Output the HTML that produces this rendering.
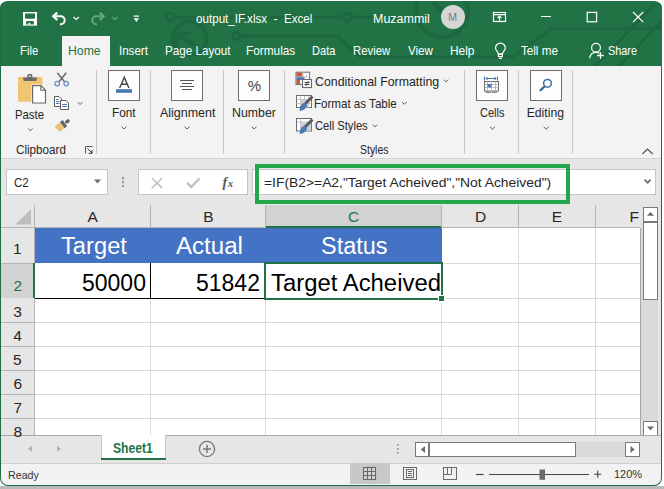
<!DOCTYPE html>
<html><head><meta charset="utf-8">
<style>
html,body{margin:0;padding:0;}
body{width:664px;height:489px;position:relative;overflow:hidden;background:#ffffff;font-family:"Liberation Sans",sans-serif;}
.a{position:absolute;box-sizing:border-box;}
.t{position:absolute;white-space:pre;line-height:1;transform-origin:0 0;font-family:"Liberation Sans",sans-serif;}
svg{position:absolute;overflow:visible;}
</style></head><body>
<!-- bottom grey strip -->
<div class="a" style="left:0;top:486px;width:664px;height:3px;background:#b9b9b9"></div>
<!-- window -->
<div class="a" style="left:0;top:1px;width:662px;height:485px;border-radius:7px 7px 8px 8px;background:#f3f3f3;overflow:hidden">
<div class="a" style="left:0;top:-1px;width:664px;height:489px">
<!-- title bar + tabs green -->
<div class="a" style="left:0;top:1px;width:662px;height:65px;border-radius:7px 7px 0 0;background:#217346;overflow:hidden">
<svg width="662" height="65" style="left:0;top:0" fill="none" stroke="#1d683e" stroke-width="3">
  <path d="M174 16 H343 M351 16 H414" />
  <circle cx="170" cy="16" r="4"/>
  <circle cx="347" cy="16" r="4"/>
  <circle cx="189.8" cy="37.4" r="17" stroke-width="4"/>
  <path d="M178.5 33.5 L199 47 M177 46 V32.4 H191" stroke-width="4"/>
  <path d="M240 35.2 H338 L360 56 H512 L552 27.5 H662" />
  <circle cx="236.2" cy="35.2" r="3.6"/>
  <circle cx="442" cy="10" r="26" stroke-width="4"/>
  <path d="M430 -2 L452 20" stroke-width="4"/>
  <path d="M594 66 L655 3 M618 66 L662 20" />
</svg>
</div>
<!-- Home tab -->
<div class="a" style="left:62px;top:36px;width:48px;height:31px;background:#f3f3f3"></div>
<!-- ribbon bottom line -->
<div class="a" style="left:1px;top:158px;width:660px;height:1px;background:#d4d4d4"></div>
<!-- formula bar area -->
<div class="a" style="left:1px;top:159px;width:660px;height:46px;background:#e6e6e6"></div>

<!-- ===== QAT icons ===== -->
<svg width="664" height="40" style="left:0;top:0" fill="none" stroke="#ffffff" stroke-width="2">
  <!-- save -->
  <rect x="23" y="12" width="14" height="13.6" fill="#fff" stroke="none"/>
  <path d="M25 13.4 H35 V18 L34.2 18.8 H25.8 L25 18 Z" fill="#217346" stroke="none"/>
  <rect x="26.2" y="21" width="7.6" height="3.4" fill="#217346" stroke="none"/>
  <rect x="28.4" y="22.8" width="1.9" height="1.8" fill="#fff" stroke="none"/>
  <!-- undo -->
  <path d="M53.5 16.3 H60.7 A4 4 0 0 1 60.7 24.3 H60" stroke-width="2"/>
  <path d="M57.2 12.6 L53.4 16.3 L57.2 20" stroke-width="2.4"/>
  <path d="M73.5 17 L76.2 19.5 L79 17" stroke-width="1.1"/>
  <!-- redo (disabled) -->
  <g stroke="#64a67e">
  <path d="M103.5 16.3 H96.3 A4 4 0 0 0 96.3 24.3 H97" stroke-width="2"/>
  <path d="M99.8 12.6 L103.6 16.3 L99.8 20" stroke-width="2.4"/>
  <path d="M112.3 17 L115 19.5 L117.7 17" stroke-width="1.1"/>
  </g>
  <!-- customize -->
  <path d="M133.7 16.2 H139" stroke-width="1.3"/>
  <path d="M133.7 18.2 H139 L136.35 21.9 Z" fill="#fff" stroke="none"/>
  <!-- ribbon display options -->
  <rect x="493.5" y="12.5" width="12" height="9" stroke-width="1.2"/>
  <path d="M493.5 14.6 H505.5" stroke-width="1.2"/>
  <path d="M499.5 16 V22 M497.5 18 L499.5 16 L501.5 18" stroke-width="1.1"/>
  <!-- minimize -->
  <path d="M541 16.5 H551" stroke-width="1.1"/>
  <!-- maximize -->
  <rect x="587.2" y="12.4" width="9.4" height="9.4" stroke-width="1.2"/>
  <!-- close -->
  <path d="M633 12 L643.2 22.2 M643.2 12 L633 22.2" stroke-width="1.2"/>
  <!-- avatar -->
  <circle cx="453" cy="17" r="12" fill="#d6d6d6" stroke="none"/>
</svg>
<!-- tell me bulb + share -->
<svg width="664" height="70" style="left:0;top:0" fill="none" stroke="#ffffff" stroke-width="1.2">
  <path d="M498.4 54.2 C498.4 51.8 495.5 50.3 495.5 48 A4.9 4.9 0 1 1 505.3 48 C505.3 50.3 502.4 51.8 502.4 54.2 Z"/>
  <rect x="498.4" y="54.2" width="4" height="2.4"/>
  <path d="M499 58.4 H501.9"/>
  <circle cx="596" cy="47.8" r="4.4"/>
  <path d="M589.5 58.3 C590.3 54.5 592.5 52.4 596 52.4 C597.5 52.4 598.5 52.7 599.5 53.2"/>
  <path d="M597.2 55.5 H603.8 M600.5 52.2 V58.8" stroke-width="1.3"/>
</svg>

<!-- ===== Ribbon icons ===== -->
<svg width="664" height="160" style="left:0;top:0">
  <!-- paste -->
  <rect x="18" y="77" width="24.4" height="24.7" rx="1.5" fill="#efc574"/>
  <path d="M23.2 77.4 H36.8 V79.5 Q36.8 81 35.3 81 H24.7 Q23.2 81 23.2 79.5 Z" fill="#6a6a6a"/>
  <rect x="27.3" y="74" width="5.1" height="4" rx="1.6" fill="#6a6a6a"/>
  <circle cx="29.85" cy="76.2" r="0.9" fill="#f3f3f3"/>
  <path d="M31.5 84.5 H41 L46.3 89.8 V103.8 H31.5 Z" fill="#f3f3f3"/>
  <path d="M32.6 85.6 H40.8 L45.5 90.3 V103 H32.6 Z" fill="#ffffff" stroke="#6a6a6a" stroke-width="1.2"/>
  <path d="M40.8 85.6 V90.3 H45.5" fill="none" stroke="#6a6a6a" stroke-width="1.1"/>
  <!-- scissors -->
  <path d="M57.3 72.8 L64.6 81.8 M66.3 72.8 L59 81.8" stroke="#6a6a6a" stroke-width="1.5"/>
  <circle cx="57.2" cy="83.6" r="2.3" fill="none" stroke="#6b8fbf" stroke-width="1.3"/>
  <circle cx="66.2" cy="83.6" r="2.3" fill="none" stroke="#6b8fbf" stroke-width="1.3"/>
  <!-- copy -->
  <path d="M54.5 96.5 H59 L61.5 99 V106.5 H54.5 Z" fill="#fff" stroke="#5a5a5a" stroke-width="1"/>
  <path d="M56 99.5 H58.5 M56 101.5 H59.5 M56 103.5 H59.5" stroke="#4a78b0" stroke-width="1"/>
  <path d="M60.5 100.5 H66 L68.5 103 V109.5 H60.5 Z" fill="#fff" stroke="#5a5a5a" stroke-width="1"/>
  <path d="M62 104.5 H67 M62 106.5 H67" stroke="#4a78b0" stroke-width="1"/>
  <path d="M78 102.3 L80.1 104.5 L82.2 102.3" fill="none" stroke="#5a5a5a" stroke-width="1"/>
  <!-- format painter -->
  <g transform="translate(62 125.3) rotate(-36)">
    <path d="M-6.8 -3.2 L-0.3 -3.8 V3.8 L-5.6 3.8 Z" fill="#ecc06c"/>
    <rect x="0.2" y="-3.8" width="3.4" height="7.6" fill="#646464"/>
    <rect x="4.4" y="-1.6" width="4.6" height="3.2" rx="1" fill="#646464"/>
  </g>
  <!-- chevrons -->
  <path d="M28.2 128.5 L30.4 130.8 L32.6 128.5" fill="none" stroke="#5a5a5a" stroke-width="1"/>
  <path d="M121.7 126.6 L124.1 129 L126.5 126.6" fill="none" stroke="#5a5a5a" stroke-width="1"/>
  <path d="M184.5 126.6 L187 129 L189.5 126.6" fill="none" stroke="#5a5a5a" stroke-width="1"/>
  <path d="M251.6 126.6 L254.1 129 L256.6 126.6" fill="none" stroke="#5a5a5a" stroke-width="1"/>
  <path d="M489.9 126.8 L492.4 129.2 L494.9 126.8" fill="none" stroke="#5a5a5a" stroke-width="1"/>
  <path d="M543.7 126.8 L546.2 129.2 L548.7 126.8" fill="none" stroke="#5a5a5a" stroke-width="1"/>
  <path d="M443.8 79.7 L446 81.9 L448.2 79.7" fill="none" stroke="#5a5a5a" stroke-width="1"/>
  <path d="M402.2 102.1 L404.4 104.3 L406.6 102.1" fill="none" stroke="#5a5a5a" stroke-width="1"/>
  <path d="M372.8 124.7 L375 126.9 L377.2 124.7" fill="none" stroke="#5a5a5a" stroke-width="1"/>
  <!-- dialog launcher -->
  <path d="M85.5 153.5 V146.5 H92.5" fill="none" stroke="#5a5a5a" stroke-width="1"/>
  <path d="M87.5 148.5 L92 153 M92 150 V153.3 H88.7" fill="none" stroke="#333" stroke-width="1"/>
  <!-- separators -->
  <path d="M96.5 70 V154 M150.5 70 V154 M223.5 70 V154 M284.5 70 V154 M464.5 70 V154 M518.5 70 V154 M572.5 70 V154" stroke="#c8c8c8" stroke-width="1"/>
  <!-- icon boxes -->
  <rect x="108.5" y="70.5" width="31" height="30" fill="#fdfdfd" stroke="#6e6e6e" stroke-width="1"/>
  <rect x="171.5" y="70.5" width="31" height="30" fill="#fdfdfd" stroke="#6e6e6e" stroke-width="1"/>
  <rect x="238.5" y="70.5" width="31" height="30" fill="#fdfdfd" stroke="#6e6e6e" stroke-width="1"/>
  <rect x="476.5" y="70.5" width="31" height="30" fill="#fdfdfd" stroke="#6e6e6e" stroke-width="1"/>
  <rect x="530.5" y="70.5" width="31" height="30" fill="#fdfdfd" stroke="#6e6e6e" stroke-width="1"/>
  <!-- font A -->
  <path d="M119.7 88 L124.3 77.2 L128.9 88 M121.3 84.3 H127.3" fill="none" stroke="#444" stroke-width="1.4"/>
  <rect x="116" y="89.2" width="16" height="3.6" fill="#4a74b4"/>
  <!-- alignment -->
  <path d="M180 80.5 H194 M182 83.5 H192 M180 86.5 H194 M182 89.5 H192" stroke="#555" stroke-width="1"/>
  <!-- percent -->
  <text x="254.5" y="91" font-family="Liberation Sans" font-size="15" fill="#444" text-anchor="middle">%</text>
  <!-- cells icon -->
  <path d="M484.5 76.5 V80.5 M497.5 76.5 V80.5" stroke="#4a78b0" stroke-width="1"/>
  <path d="M486 78.5 H496 M487.5 77 L486 78.5 L487.5 80 M494.5 77 L496 78.5 L494.5 80" fill="none" stroke="#4a78b0" stroke-width="1"/>
  <rect x="484.5" y="81.5" width="14" height="9.5" fill="#fff" stroke="#6a6a6a" stroke-width="1"/>
  <path d="M484.5 84.5 H498.5 M484.5 87.5 H498.5 M487.5 81.5 V91 M491.5 81.5 V91 M495.5 81.5 V91" stroke="#b0b0b0" stroke-width="0.8"/>
  <rect x="487.5" y="84" width="4" height="3.4" fill="#4a78b0"/>
  <path d="M485.5 92.3 H491 M492 92.3 H497" stroke="#6a6a6a" stroke-width="1"/>
  <!-- magnifier -->
  <circle cx="547.5" cy="83.3" r="3.9" fill="none" stroke="#3e6fa3" stroke-width="1.5"/>
  <path d="M544.5 86.5 L540.6 90.2" stroke="#3e6fa3" stroke-width="2.4" stroke-linecap="round"/>
  <!-- conditional formatting -->
  <rect x="296" y="72.2" width="13.6" height="12.2" fill="#fff" stroke="#6a6a6a" stroke-width="1"/>
  <rect x="296.5" y="72.7" width="6" height="4" fill="#d0553a"/>
  <rect x="296.5" y="76.7" width="8" height="3.3" fill="#4a78b0"/>
  <rect x="296.5" y="80" width="3.5" height="4" fill="#d0553a"/>
  <path d="M303 72.5 V77 M306.5 72.5 V77 M296.5 77 H309.5" stroke="#bbb" stroke-width="0.7"/>
  <rect x="302.5" y="79.5" width="9" height="8" fill="#fff" stroke="#6a6a6a" stroke-width="1.1"/>
  <path d="M304.5 82.5 H309.5 M304.5 84.5 H309.5 M308.5 81 L305.5 86" stroke="#333" stroke-width="0.9"/>
  <!-- format as table -->
  <rect x="296.5" y="95.5" width="15" height="12" fill="#fff" stroke="#6a6a6a" stroke-width="1"/>
  <path d="M296.5 99.5 H311.5 M296.5 103.5 H311.5 M300.5 95.5 V107.5 M304.5 95.5 V107.5 M308.5 95.5 V107.5" stroke="#b8b8b8" stroke-width="0.8"/>
  <rect x="300.5" y="99.5" width="8" height="8" fill="#c9d0da"/>
  <path d="M312.5 96.5 L305 104" stroke="#5a5a5a" stroke-width="3"/>
  <path d="M305.5 103 C303 102.5 300.5 104.5 300 108 L299.5 111 C303 110.5 306 109 307 106 Z" fill="#4a78b0"/>
  <!-- cell styles -->
  <rect x="296.5" y="118.5" width="15" height="12.5" fill="#fff" stroke="#6a6a6a" stroke-width="1"/>
  <path d="M296.5 122 H311.5 M300.5 118.5 V131" stroke="#b8b8b8" stroke-width="0.8"/>
  <rect x="300.8" y="122.3" width="10.4" height="8.4" fill="#c9d0da"/>
  <path d="M312.5 119.5 L305 127" stroke="#5a5a5a" stroke-width="3"/>
  <path d="M305.5 126 C303 125.5 300.5 127.5 300 131 L299.5 134 C303 133.5 306 132 307 129 Z" fill="#4a78b0"/>
  <!-- collapse ribbon -->
  <path d="M642.3 154 L647.5 149 L652.7 154" fill="none" stroke="#555" stroke-width="1.1"/>
</svg>

<!-- ===== Formula bar ===== -->
<div class="a" style="left:6px;top:169px;width:102px;height:26px;background:#fff;border:1px solid #c6c6c6"></div>
<div class="a" style="left:138px;top:169px;width:110px;height:26px;background:#fff;border:1px solid #c6c6c6"></div>
<div class="a" style="left:252px;top:169px;width:404px;height:26px;background:#fff;border:1px solid #c6c6c6"></div>
<svg width="664" height="210" style="left:0;top:0">
  <path d="M94 179.5 H101 L97.5 183.5 Z" fill="#6e6e6e"/>
  <rect x="122" y="177.2" width="2" height="2" fill="#8f8f8f"/>
  <rect x="122" y="181.2" width="2" height="2" fill="#8f8f8f"/>
  <rect x="122" y="185.2" width="2" height="2" fill="#8f8f8f"/>
  <path d="M151.8 178 L162.2 188.2 M162.2 178 L151.8 188.2" stroke="#c2c2c2" stroke-width="1.7"/>
  <path d="M187 182.6 L191.2 187 L199.6 178.5" fill="none" stroke="#c2c2c2" stroke-width="2.4"/>
  <text x="222.5" y="187" font-family="Liberation Serif" font-style="italic" font-weight="bold" font-size="14" fill="#555">f</text>
  <text x="228" y="187.3" font-family="Liberation Serif" font-style="italic" font-weight="bold" font-size="10" fill="#555">x</text>
  <path d="M644.6 179.6 L647.6 182.8 L650.6 179.6" fill="none" stroke="#6e6e6e" stroke-width="1.8"/>
</svg>
<!-- green highlight -->
<div class="a" style="left:254.5px;top:164px;width:315px;height:40px;border:4.7px solid #22a74c"></div>

<!-- ===== Grid ===== -->
<div class="a" style="left:1px;top:205px;width:639px;height:230px;background:#ffffff"></div>
<!-- col header row -->
<div class="a" style="left:1px;top:205px;width:639px;height:23px;background:#e6e6e6"></div>
<div class="a" style="left:265px;top:205px;width:176px;height:23px;background:#d2d2d2"></div>
<div class="a" style="left:265px;top:226px;width:177px;height:2px;background:#217346"></div>
<!-- row header column -->
<div class="a" style="left:1px;top:228px;width:33px;height:207px;background:#e6e6e6"></div>
<div class="a" style="left:1px;top:263px;width:33px;height:35px;background:#d2d2d2"></div>
<svg width="664" height="440" style="left:0;top:0">
  <!-- select all triangle -->
  <path d="M31 209.2 V224.5 H15.3 Z" fill="#bdbdbd"/>
  <!-- header separators -->
  <path d="M34.5 205 V435 M150.5 205 V228 M265.5 205 V228 M441.5 205 V228 M518.5 205 V228 M595.5 205 V228" stroke="#b4b4b4" stroke-width="1"/>
  <path d="M1 227.5 H265 M442 227.5 H640" stroke="#b4b4b4" stroke-width="1"/>
  <path d="M1 263.5 H34 M1 322.5 H34 M1 346.5 H34 M1 370.5 H34 M1 394.5 H34 M1 418.5 H34" stroke="#b4b4b4" stroke-width="1"/>
  <!-- gridlines -->
  <path d="M442 263.5 H640 M35 322.5 H640 M35 346.5 H640 M35 370.5 H640 M35 394.5 H640 M35 418.5 H640 M442 298.5 H640" stroke="#d9d9d9" stroke-width="1"/>
  <path d="M150.5 298 V435 M265.5 298 V435 M441.5 228 V435 M518.5 228 V435 M595.5 228 V435" stroke="#d9d9d9" stroke-width="1"/>
</svg>
<!-- row 2 header green border -->
<div class="a" style="left:33px;top:263px;width:2px;height:35px;background:#217346"></div>
<!-- blue row 1 -->
<div class="a" style="left:35px;top:228px;width:407px;height:35px;background:#4472c4"></div>
<!-- A2:B2 borders -->
<div class="a" style="left:35px;top:298px;width:230px;height:1px;background:#000"></div>
<div class="a" style="left:150px;top:263px;width:1px;height:35px;background:#000"></div>
<!-- C2 selection -->
<div class="a" style="left:264px;top:262px;width:179px;height:38px;border:2px solid #217346"></div>
<div class="a" style="left:437.5px;top:294.5px;width:8px;height:8px;background:#fff"></div>
<div class="a" style="left:439px;top:296px;width:5px;height:5px;background:#217346"></div>

<!-- vertical scrollbar -->
<div class="a" style="left:640px;top:205px;width:21px;height:230px;background:#e6e6e6"></div>
<div class="a" style="left:641px;top:222px;width:17px;height:199px;background:#dadada"></div>
<div class="a" style="left:640px;top:228px;width:1px;height:207px;background:#a6a6a6"></div>
<div class="a" style="left:643px;top:207px;width:15px;height:15px;background:#fff;border:1px solid #7a7a7a"></div>
<div class="a" style="left:643px;top:221px;width:15px;height:79px;background:#fff;border:1px solid #7a7a7a;border-top-width:2px"></div>
<div class="a" style="left:643px;top:421px;width:15px;height:15px;background:#fff;border:1px solid #7a7a7a"></div>
<svg width="664" height="440" style="left:0;top:0">
  <path d="M647 215.7 L650.5 211.9 L654.1 215.7 Z" fill="#6a6a6a"/>
  <path d="M647 426.5 L650.5 430.3 L654.1 426.5 Z" fill="#6a6a6a"/>
</svg>

<!-- ===== Sheet tab bar ===== -->
<div class="a" style="left:1px;top:435px;width:660px;height:28px;background:#e6e6e6;border-top:1px solid #a8a8a8"></div>
<div class="a" style="left:101px;top:435px;width:65px;height:25px;background:#fff;border-left:1px solid #c6c6c6;border-right:1px solid #c6c6c6"></div>
<div class="a" style="left:101px;top:458px;width:65px;height:2px;background:#217346"></div>
<svg width="664" height="489" style="left:0;top:0">
  <path d="M32 445.5 V452 L28 448.75 Z" fill="#b4b4b4"/>
  <path d="M57 445.5 V452 L61 448.75 Z" fill="#b4b4b4"/>
  <circle cx="207" cy="449" r="7.6" fill="none" stroke="#777" stroke-width="1.3"/>
  <path d="M203 449 H211 M207 445 V453" stroke="#777" stroke-width="1.5"/>
  <rect x="397" y="444" width="1.6" height="1.6" fill="#8f8f8f"/>
  <rect x="397" y="448" width="1.6" height="1.6" fill="#8f8f8f"/>
  <rect x="397" y="452" width="1.6" height="1.6" fill="#8f8f8f"/>
</svg>
<!-- horizontal scrollbar -->
<div class="a" style="left:415px;top:442px;width:224px;height:15px;background:#dadada"></div>
<div class="a" style="left:415px;top:442px;width:15px;height:15px;background:#fff;border:1px solid #7a7a7a"></div>
<div class="a" style="left:428px;top:442px;width:148px;height:15px;background:#fff;border:1px solid #7a7a7a;border-left-width:2px"></div>
<div class="a" style="left:625px;top:442px;width:15px;height:15px;background:#fff;border:1px solid #7a7a7a"></div>
<svg width="664" height="489" style="left:0;top:0">
  <path d="M425 446 V453 L420.8 449.5 Z" fill="#6a6a6a"/>
  <path d="M630.5 446 V453 L634.7 449.5 Z" fill="#6a6a6a"/>
</svg>

<!-- ===== Status bar ===== -->
<div class="a" style="left:1px;top:463px;width:660px;height:22px;background:#f2f2f2;border-top:1px solid #d0d0d0"></div>
<div class="a" style="left:350px;top:463px;width:40px;height:21px;background:#c8c8c8"></div>
<svg width="664" height="489" style="left:0;top:0">
  <!-- normal view grid -->
  <rect x="363.5" y="467.5" width="12" height="12" fill="#d6d6d6" stroke="#6a6a6a" stroke-width="1.1"/>
  <path d="M367.5 467.5 V479.5 M371.5 467.5 V479.5 M363.5 471.5 H375.5 M363.5 475.5 H375.5" stroke="#6a6a6a" stroke-width="1.1"/>
  <!-- page layout -->
  <rect x="403.5" y="467.5" width="13" height="12" fill="none" stroke="#6a6a6a" stroke-width="1"/>
  <rect x="406.5" y="469.5" width="7" height="8" fill="none" stroke="#6a6a6a" stroke-width="1"/>
  <path d="M408 471.5 H412 M408 473.5 H412 M408 475.5 H412" stroke="#6a6a6a" stroke-width="1"/>
  <!-- page break -->
  <rect x="443.5" y="467.5" width="13" height="12" fill="none" stroke="#6a6a6a" stroke-width="1"/>
  <path d="M443.5 474.5 H451.5 V467.5 M447.5 467.5 V474.5" fill="none" stroke="#6a6a6a" stroke-width="1"/>
  <!-- zoom slider -->
  <path d="M476 474.5 H483.5" stroke="#444" stroke-width="1.2"/>
  <path d="M489 474.5 H589" stroke="#444" stroke-width="1"/>
  <rect x="539.5" y="469.5" width="5.5" height="10.3" fill="#6a6a6a"/>
  <path d="M594.2 474.2 H601.3 M597.75 470.6 V477.8" stroke="#444" stroke-width="1.1"/>
</svg>

<div class="t" style="left:195.5px;top:12.0px;font-size:13px;color:#ffffff;transform:scaleX(0.8946);">output_IF.xlsx  -  Excel</div>
<div class="t" style="left:372.84px;top:12.0px;font-size:13px;color:#ffffff;transform:scaleX(0.9603);">Muzammil</div>
<div class="t" style="left:448.35px;top:12.0px;font-size:10.5px;color:#767676;">M</div>
<div class="t" style="left:20.43px;top:44.0px;font-size:13px;color:#ffffff;transform:scaleX(0.875);">File</div>
<div class="t" style="left:68.46px;top:44.0px;font-size:13px;color:#217346;transform:scaleX(0.9412);">Home</div>
<div class="t" style="left:118.51px;top:44.0px;font-size:13px;color:#ffffff;transform:scaleX(0.8875);">Insert</div>
<div class="t" style="left:164.5px;top:44.0px;font-size:13px;color:#ffffff;transform:scaleX(0.8958);">Page Layout</div>
<div class="t" style="left:246.39px;top:44.0px;font-size:13px;color:#ffffff;transform:scaleX(0.9094);">Formulas</div>
<div class="t" style="left:312.35px;top:44.0px;font-size:13px;color:#ffffff;transform:scaleX(0.8519);">Data</div>
<div class="t" style="left:353.43px;top:44.0px;font-size:13px;color:#ffffff;transform:scaleX(0.8738);">Review</div>
<div class="t" style="left:407.9px;top:44.0px;font-size:13px;color:#ffffff;transform:scaleX(0.8893);">View</div>
<div class="t" style="left:449.78px;top:44.0px;font-size:13px;color:#ffffff;transform:scaleX(0.9154);">Help</div>
<div class="t" style="left:521.1px;top:44.0px;font-size:13px;color:#ffffff;transform:scaleX(0.8951);">Tell me</div>
<div class="t" style="left:607.56px;top:44.0px;font-size:13px;color:#ffffff;transform:scaleX(0.8353);">Share</div>
<div class="t" style="left:15.37px;top:109.0px;font-size:12.2px;color:#262626;transform:scaleX(0.93);">Paste</div>
<div class="t" style="left:15.7px;top:144.0px;font-size:12px;color:#262626;transform:scaleX(0.9706);">Clipboard</div>
<div class="t" style="left:111.73px;top:107.0px;font-size:12.2px;color:#262626;transform:scaleX(0.9667);">Font</div>
<div class="t" style="left:159.5px;top:107.0px;font-size:12.2px;color:#262626;transform:scaleX(1.0222);">Alignment</div>
<div class="t" style="left:231.59px;top:107.0px;font-size:12.2px;color:#262626;transform:scaleX(1.0116);">Number</div>
<div class="t" style="left:315.3px;top:75.0px;font-size:13px;color:#262626;transform:scaleX(0.9492);">Conditional Formatting</div>
<div class="t" style="left:314.41px;top:97.0px;font-size:13px;color:#262626;transform:scaleX(0.8902);">Format as Table</div>
<div class="t" style="left:315.3px;top:119.0px;font-size:13px;color:#262626;transform:scaleX(0.8574);">Cell Styles</div>
<div class="t" style="left:359.53px;top:144.0px;font-size:12px;color:#262626;transform:scaleX(0.8719);">Styles</div>
<div class="t" style="left:479.6px;top:107.0px;font-size:12.2px;color:#262626;transform:scaleX(0.9037);">Cells</div>
<div class="t" style="left:526.7px;top:107.0px;font-size:12.2px;color:#262626;">Editing</div>
<div class="t" style="left:13.7px;top:176.0px;font-size:13px;color:#262626;transform:scaleX(0.8875);">C2</div>
<div class="t" style="left:264.2px;top:177.0px;font-size:12.8px;color:#262626;transform:scaleX(1.0823);">=IF(B2&gt;=A2,"Target Acheived","Not Acheived")</div>
<div class="t" style="left:87.55px;top:209.0px;font-size:15.5px;color:#262626;">A</div>
<div class="t" style="left:203.15px;top:209.0px;font-size:15.5px;color:#262626;">B</div>
<div class="t" style="left:348.1px;top:209.0px;font-size:15.5px;color:#217346;">C</div>
<div class="t" style="left:475.1px;top:209.0px;font-size:15.5px;color:#262626;">D</div>
<div class="t" style="left:551.85px;top:209.0px;font-size:15.5px;color:#262626;">E</div>
<div class="t" style="left:629.5px;top:209.0px;font-size:15.5px;color:#262626;">F</div>
<div class="t" style="left:12.9px;top:241.0px;font-size:15.5px;color:#262626;">1</div>
<div class="t" style="left:13.5px;top:278.0px;font-size:15.5px;color:#217346;">2</div>
<div class="t" style="left:13.25px;top:304.0px;font-size:15.5px;color:#262626;">3</div>
<div class="t" style="left:13.3px;top:328.0px;font-size:15.5px;color:#262626;">4</div>
<div class="t" style="left:12.95px;top:352.0px;font-size:15.5px;color:#262626;">5</div>
<div class="t" style="left:13.55px;top:376.0px;font-size:15.5px;color:#262626;">6</div>
<div class="t" style="left:13.5px;top:400.0px;font-size:15.5px;color:#262626;">7</div>
<div class="t" style="left:13.45px;top:424.0px;font-size:15.5px;color:#262626;">8</div>
<div class="t" style="left:60.6px;top:235.0px;font-size:23.5px;color:#ffffff;transform:scaleX(1.0092);">Target</div>
<div class="t" style="left:175.9px;top:235.0px;font-size:23.5px;color:#ffffff;transform:scaleX(1.025);">Actual</div>
<div class="t" style="left:320.5px;top:235.0px;font-size:23.5px;color:#ffffff;transform:scaleX(0.9969);">Status</div>
<div class="t" style="left:81.52px;top:272.0px;font-size:23.5px;color:#000000;transform:scaleX(0.9781);">50000</div>
<div class="t" style="left:195.82px;top:272.0px;font-size:23.5px;color:#000000;transform:scaleX(0.9781);">51842</div>
<div class="t" style="left:271.3px;top:272.0px;font-size:23.5px;color:#000000;transform:scaleX(1.0163);">Target Acheived</div>
<div class="t" style="left:113.2px;top:441.0px;font-size:14px;color:#217346;font-weight:700;transform:scaleX(0.8674);">Sheet1</div>
<div class="t" style="left:7.73px;top:470.0px;font-size:11px;color:#333333;transform:scaleX(0.971);">Ready</div>
<div class="t" style="left:614.0px;top:469.0px;font-size:11px;color:#333333;">120%</div>
</div>
</div>
<!-- window frame border -->
<div class="a" style="left:0;top:1px;width:662px;height:485px;border-radius:7px 7px 8px 8px;border:1px solid #1f6b42;border-top-color:transparent"></div>
</body></html>
